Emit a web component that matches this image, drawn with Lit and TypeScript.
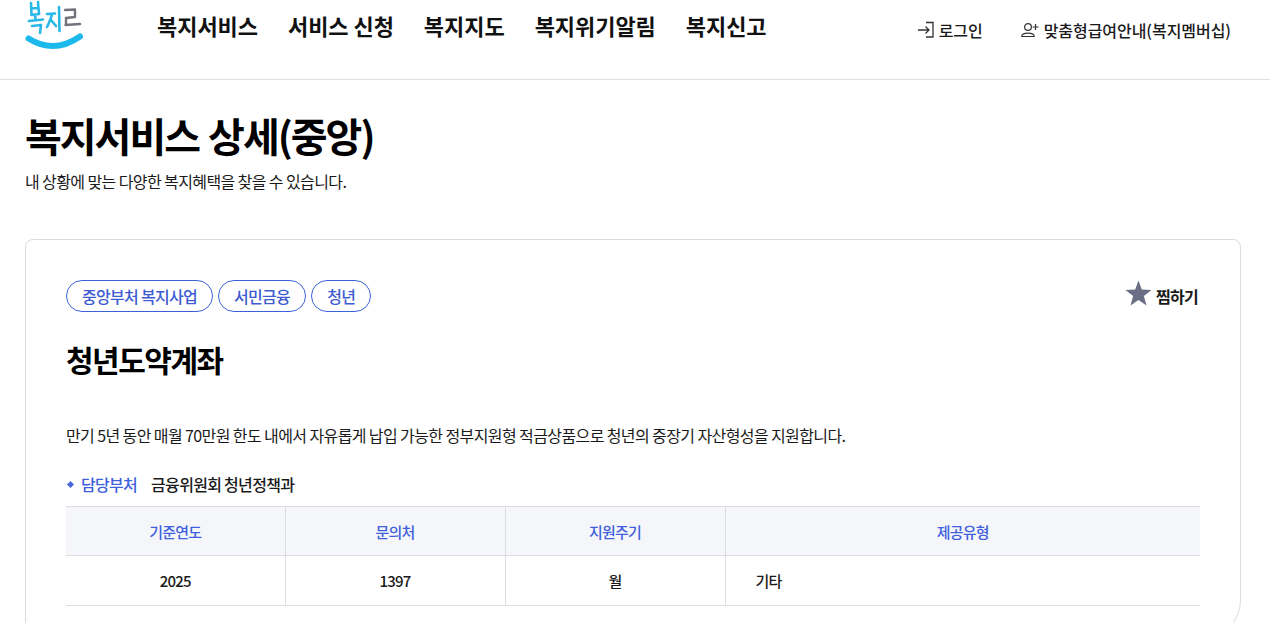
import { LitElement, html, css } from "lit";
import { customElement } from "lit/decorators.js";

@customElement("app-root")
export class AppRoot extends LitElement {
  static styles = css`
    :host {
      display: block;
      width: 1270px;
      height: 623px;
      overflow: hidden;
      background: #fff;
      color: #000;
      font-family: "Noto Sans CJK KR", "Noto Sans", sans-serif;
    }
    * { box-sizing: border-box; }
    header {
      height: 80px;
      border-bottom: 1px solid #e0e0e0;
      display: flex;
      align-items: flex-start;
      padding-left: 24px;
    }
    .logo { width: 60px; height: 50px; flex: none; display: block; }
    nav {
      display: flex;
      gap: 30px;
      margin-left: 73px;
      padding-top: 10px;
      font-size: 22px;
      font-weight: 700;
      line-height: 30px;
      letter-spacing: -0.05px;
      color: #111;
    }
    .util {
      margin-left: auto;
      display: flex;
      align-items: center;
      padding: 18px 39px 0 0;
      gap: 38px;
      font-size: 16px;
      font-weight: 500;
      line-height: 24px;
      letter-spacing: -0.05px;
      color: #1a1a1a;
    }
    .util a { display: flex; align-items: center; gap: 5px; }
    .util svg { display: block; flex: none; }
    main { padding: 27px 29px 0 25px; }
    h1 {
      margin: 0;
      font-size: 40px;
      font-weight: 700;
      line-height: 56px;
      letter-spacing: -2px;
      word-spacing: 2px;
    }
    .sub {
      margin: 6px 0 0;
      font-size: 16px;
      line-height: 24px;
      letter-spacing: -0.6px;
      color: #1a1a1a;
    }
    .card {
      margin-top: 46px;
      height: 401px;
      width: 1216px;
      border: 1px solid #dcdcdc;
      border-radius: 8px 8px 40px 8px;
      padding: 40px 40px 0 40px;
    }
    .top { display: flex; align-items: center; justify-content: space-between; }
    .tags { display: flex; gap: 5px; }
    .tag {
      height: 32px;
      padding: 0 15px;
      border: 1px solid #3d62d8;
      border-radius: 16px;
      font-size: 16px;
      font-weight: 500;
      line-height: 30px;
      letter-spacing: -0.7px;
      color: #3d5bd0;
    }
    .fav {
      display: flex;
      align-items: center;
      gap: 4px;
      margin-right: 2px;
      font-size: 16px;
      font-weight: 700;
      letter-spacing: -0.7px;
      color: #1a1a1a;
    }
    .fav svg { display: block; margin-bottom: 6px; }
    h2 {
      margin: 25px 0 0;
      font-size: 30px;
      font-weight: 700;
      line-height: 44px;
      letter-spacing: -1.5px;
    }
    .desc {
      margin: 42px 0 0;
      font-size: 16px;
      line-height: 24px;
      letter-spacing: -0.6px;
      color: #1a1a1a;
    }
    .dept {
      margin-top: 25px;
      display: flex;
      align-items: center;
      font-size: 16px;
      font-weight: 500;
      line-height: 24px;
      letter-spacing: -0.7px;
      color: #1a1a1a;
    }
    .dot { width: 5px; height: 5px; background: #4a68dc; transform: rotate(45deg); margin: 0 8px 0 2px; }
    .dept b { font-weight: 500; color: #3f5fdc; margin-right: 14px; }
    table {
      margin-top: 10px;
      width: 1134px;
      border-collapse: collapse;
      table-layout: fixed;
      font-size: 15px;
      letter-spacing: -0.8px;
    }
    th, td { padding: 0; text-align: center; border-bottom: 1px solid #dddde1; border-right: 1px solid #dddde1; }
    td { height: 50px; font-weight: 500; color: #1a1a1a; }
    th:last-child, td:last-child { border-right: 0; }
    th {
      height: 49px;
      background: #f5f6fa;
      border-top: 1px solid #dddde1;
      color: #3f5fdc;
      font-weight: 500;
    }
    td.left { text-align: left; padding-left: 30px; }
  `;

  render() {
    return html`
      <header>
        <svg class="logo" viewBox="0 0 60 50" fill="none" stroke-linecap="round" stroke-linejoin="round">
          <path d="M4.5 38.5 Q30 54.5 56 36.5" stroke="#1cb9ec" stroke-width="6"/>
          <g stroke="#29b8e8" stroke-width="2.6">
            <path d="M7 3 L7.5 15 L15 14 L14 2 M7.5 8.5 L14 8 M11 15 L11.5 19"/>
            <path d="M5 21 L19 19.5 M8 26 L17 25 L16 33"/>
            <path d="M23 14 L31 13.5 M28 14 C27 19 25 23 23 27 M27 20 L32 26"/>
            <path d="M35 7 L35.5 31" />
          </g>
          <path d="M41 10 L51 9.5 L51 17 L42 18 L42 24.5 M41.5 25 L56 24" stroke="#72727c" stroke-width="2.4"/>
        </svg>
        <nav>
          <span>복지서비스</span><span>서비스 신청</span><span>복지지도</span><span>복지위기알림</span><span>복지신고</span>
        </nav>
        <div class="util">
          <a>
            <svg width="16" height="18" viewBox="0 0 16 18" fill="none" stroke="#333" stroke-width="1.3">
              <path d="M0 9 H11 M7.5 5.5 L11 9 L7.5 12.5"/>
              <path d="M8 1.5 H15 V16 H8"/>
            </svg>로그인
          </a>
          <a>
            <svg width="18" height="18" viewBox="0 0 18 18" fill="none" stroke="#333" stroke-width="1.2">
              <circle cx="7" cy="6" r="3.4"/>
              <path d="M0.8 15.5 C0.8 11 13.2 11 13.2 15.5 Z"/>
              <path d="M11.5 6 H17.5 M14.5 3 V9"/>
            </svg>맞춤형급여안내(복지멤버십)
          </a>
        </div>
      </header>
      <main>
        <h1>복지서비스 상세(중앙)</h1>
        <p class="sub">내 상황에 맞는 다양한 복지혜택을 찾을 수 있습니다.</p>
        <section class="card">
          <div class="top">
            <div class="tags">
              <span class="tag">중앙부처 복지사업</span><span class="tag">서민금융</span><span class="tag">청년</span>
            </div>
            <div class="fav">
              <svg width="27" height="26" viewBox="0 0 27 26"><path fill="#6b6f85" d="M13.5 0.5 L16.8 9.6 L26.5 10 L18.9 16 L21.5 25.5 L13.5 20 L5.5 25.5 L8.1 16 L0.5 10 L10.2 9.6 Z"/></svg>
              <span>찜하기</span>
            </div>
          </div>
          <h2>청년도약계좌</h2>
          <p class="desc">만기 5년 동안 매월 70만원 한도 내에서 자유롭게 납입 가능한 정부지원형 적금상품으로 청년의 중장기 자산형성을 지원합니다.</p>
          <div class="dept"><span class="dot"></span><b>담당부처</b><span>금융위원회 청년정책과</span></div>
          <table>
            <colgroup><col style="width:219px"><col style="width:220px"><col style="width:220px"><col></colgroup>
            <thead><tr><th>기준연도</th><th>문의처</th><th>지원주기</th><th>제공유형</th></tr></thead>
            <tbody><tr><td>2025</td><td>1397</td><td>월</td><td class="left">기타</td></tr></tbody>
          </table>
        </section>
      </main>
    `;
  }
}
